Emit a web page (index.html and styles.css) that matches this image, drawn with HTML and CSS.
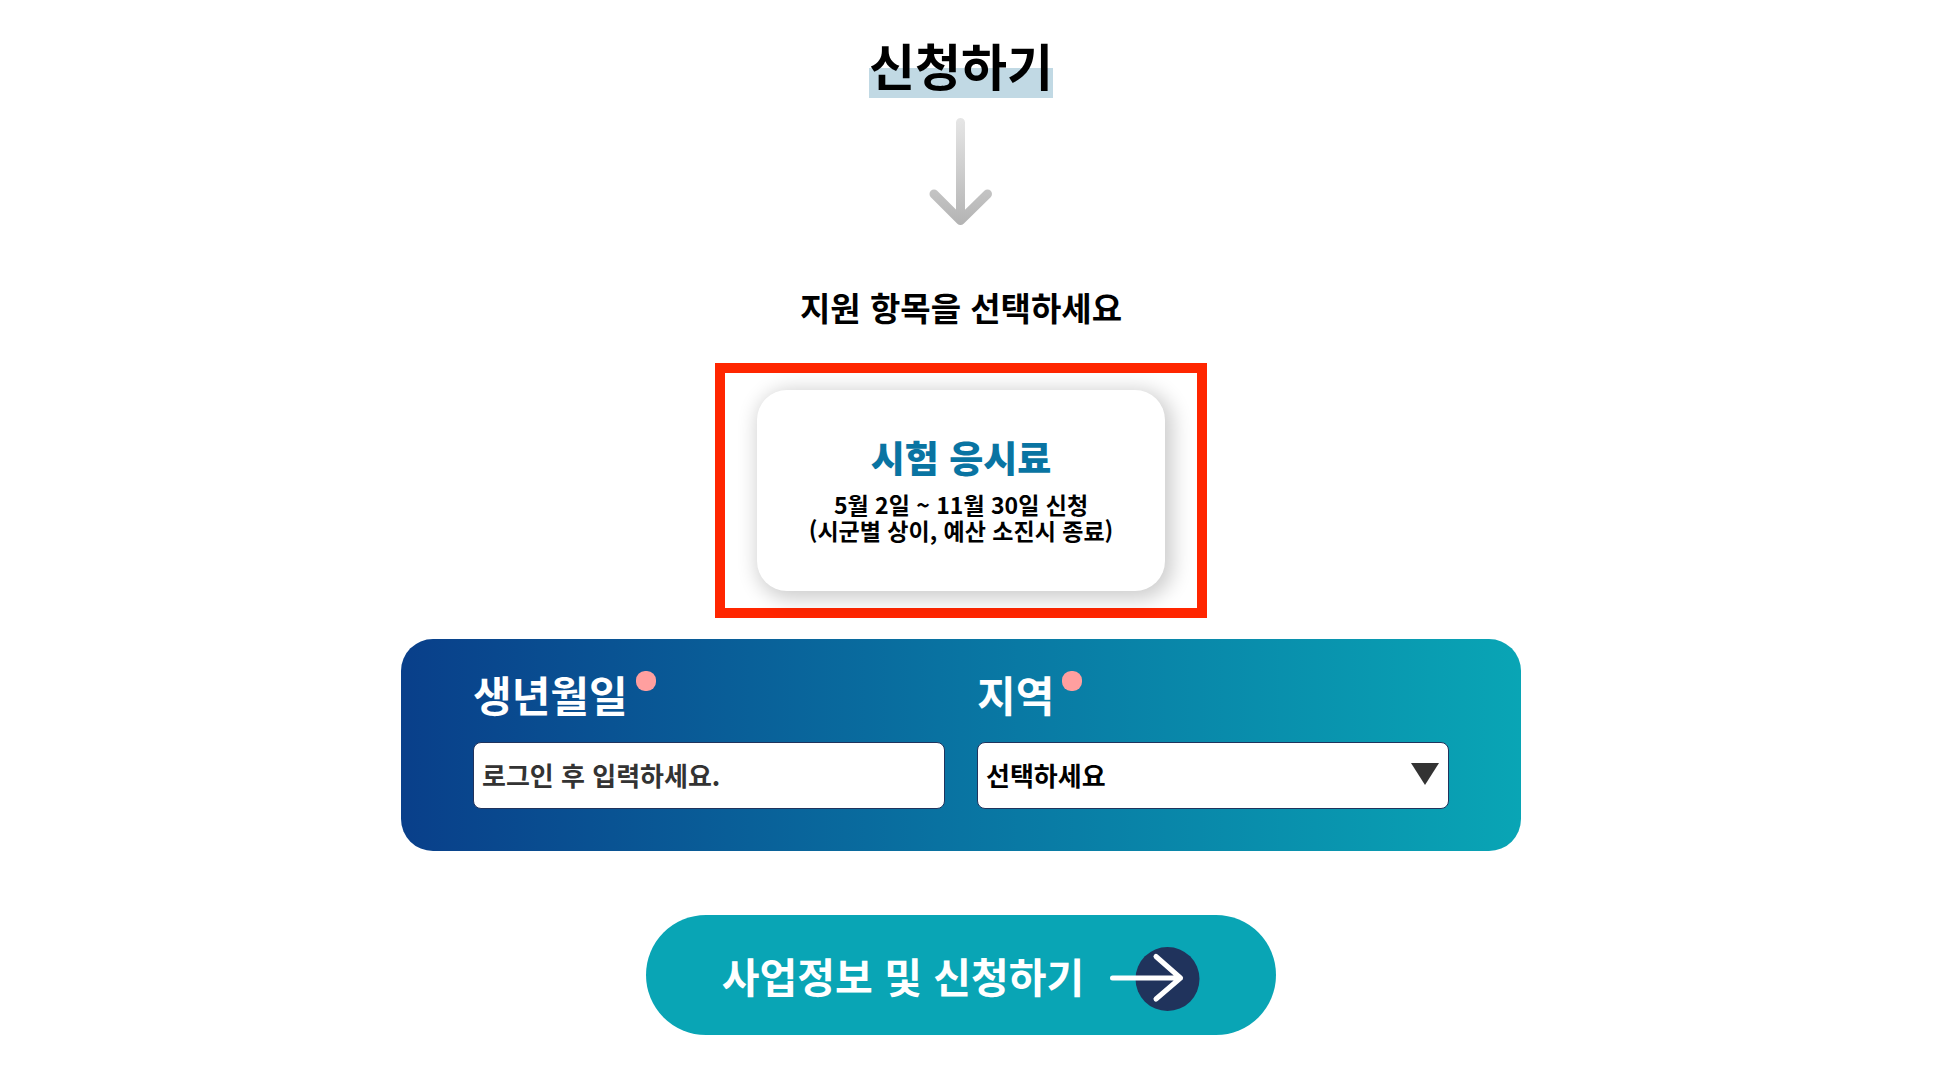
FILE: index.html
```html
<!DOCTYPE html>
<html lang="ko">
<head>
<meta charset="utf-8">
<meta name="viewport" content="width=device-width, initial-scale=1">
<title>신청하기</title>
<link rel="stylesheet" href="styles.css">
</head>
<body>
<main class="apply">
  <h1 class="apply-title">신청하기</h1>
  <svg class="down-arrow" viewBox="0 0 64 108" aria-hidden="true">
    <defs>
      <linearGradient id="fade" gradientUnits="userSpaceOnUse" x1="0" y1="0" x2="0" y2="108">
        <stop offset="0" stop-color="#e6e6e6"/>
        <stop offset="1" stop-color="#b3b3b3"/>
      </linearGradient>
    </defs>
    <path d="M31.500 4.500V101M5 76l26.500 26.500L58.500 76" fill="none" stroke="url(#fade)" stroke-width="9" stroke-linecap="round" stroke-linejoin="round"/>
  </svg>
  <h2 class="apply-subtitle">지원 항목을 선택하세요</h2>
  <div class="highlight">
    <button type="button" class="item-card">
      <strong class="item-name">시험 응시료</strong>
      <span class="item-note">5월 2일 ~ 11월 30일 신청<br>(시군별 상이, 예산 소진시 종료)</span>
    </button>
  </div>
  <form class="apply-form">
    <div class="panel">
      <div class="field">
        <label class="field-label" for="birth">생년월일<span class="required"></span></label>
        <input class="control" id="birth" type="text" placeholder="로그인 후 입력하세요.">
      </div>
      <div class="field">
        <label class="field-label" for="region">지역<span class="required"></span></label>
        <div class="select-wrap">
          <select class="control" id="region"><option>선택하세요</option></select>
          <svg class="caret" viewBox="0 0 28 22" aria-hidden="true"><path d="M0 0h28L14 22z" fill="#333"/></svg>
        </div>
      </div>
    </div>
    <button type="submit" class="submit">
      <span>사업정보 및 신청하기</span>
      <svg class="go" viewBox="0 0 90 66" aria-hidden="true">
        <circle cx="57.500" cy="33" r="32" fill="#20335c"/>
        <path d="M2.500 32H70.500M46 10.500L70.500 32 46 53" fill="none" stroke="#fff" stroke-width="5" stroke-linecap="round" stroke-linejoin="round"/>
      </svg>
    </button>
  </form>
</main>
</body>
</html>
```
FILE: styles.css
```css
* {
  box-sizing: border-box;
}

body {
  margin: 0;
  background: #fff;
  color: #000;
  font-family: "Noto Sans CJK KR", sans-serif;
  font-weight: 700;
}

button,
input,
select {
  font: inherit;
  color: inherit;
}

.apply {
  display: flex;
  flex-direction: column;
  align-items: center;
  padding: 32px 30px 48px 0;
}

.apply-title {
  margin: 0;
  padding-bottom: 2px;
  font-size: 50px;
  line-height: 64px;
  background: linear-gradient(#c1d9e4, #c1d9e4) bottom / 100% 30px no-repeat;
}

.down-arrow {
  width: 64px;
  height: 108px;
  margin-top: 20px;
}

.apply-subtitle {
  margin: 57px 0 32px;
  font-size: 33px;
  line-height: 48px;
}

.highlight {
  display: flex;
  padding: 17px 32px;
  border: 10px solid #ff2600;
}

.item-card {
  display: flex;
  flex-direction: column;
  align-items: center;
  gap: 10px;
  min-width: 408px;
  padding: 43px 32px 48px;
  border: 0;
  border-radius: 30px;
  background: #fff;
  box-shadow: 4px 4px 20px 4px rgba(0, 0, 0, 0.2);
}

.item-name {
  color: #0974a2;
  font-size: 37px;
  line-height: 48px;
}

.item-note {
  font-size: 23px;
  line-height: 26px;
}

.apply-form {
  display: flex;
  flex-direction: column;
  align-items: center;
  gap: 64px;
  width: 100%;
  max-width: 1120px;
  margin-top: 21px;
}

.panel {
  display: grid;
  grid-template-columns: 1fr 1fr;
  gap: 32px;
  width: 100%;
  padding: 32px 72px 42px;
  border-radius: 32px;
  background: linear-gradient(90deg, #093f8a, #0974a2 50%, #09a5b5);
}

.field {
  display: flex;
  flex-direction: column;
  gap: 26px;
}

.field-label {
  display: flex;
  gap: 8px;
  color: #fff;
  font-size: 42px;
  line-height: 45px;
}

.required {
  width: 20px;
  height: 20px;
  border-radius: 9px;
  background: #ff9f9f;
}

.control {
  width: 100%;
  height: 67px;
  padding: 0 8px 2px;
  border: 1px solid #20335c;
  border-radius: 8px;
  background: #fff;
  color: #000;
  font-size: 26px;
  appearance: none;
}

.control::placeholder {
  color: #333;
  opacity: 1;
}

.select-wrap {
  position: relative;
}

.caret {
  position: absolute;
  top: 21px;
  right: 10px;
  width: 28px;
  height: 22px;
  pointer-events: none;
}

.submit {
  display: flex;
  align-items: center;
  gap: 26px;
  height: 120px;
  padding: 0 76px;
  border: 0;
  border-radius: 60px;
  background: #09a5b5;
  color: #fff;
  font-size: 41px;
}

.go {
  width: 90px;
  height: 66px;
  margin-top: 8px;
}
```
